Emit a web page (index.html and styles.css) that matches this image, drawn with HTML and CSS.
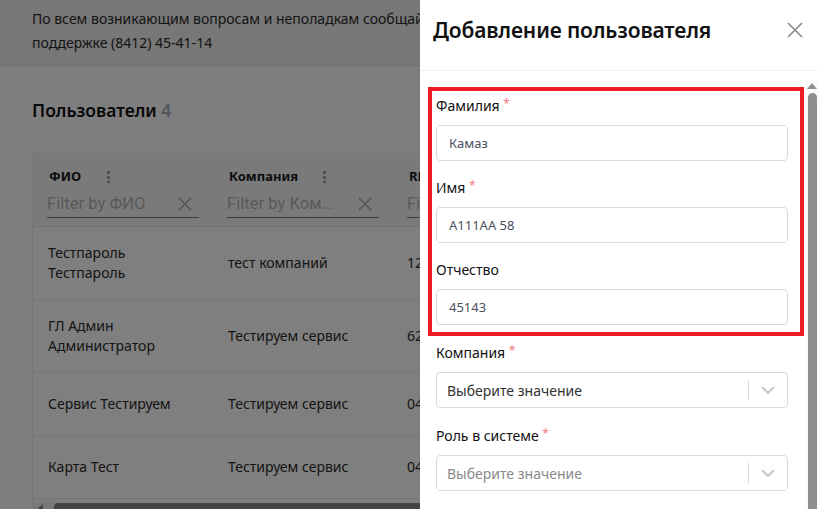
FILE: index.html
```html
<!DOCTYPE html>
<html lang="ru">
<head>
<meta charset="utf-8">
<title>Пользователи</title>
<link rel="stylesheet" href="styles.css">
</head>
<body>
<div class="page">
  <div class="banner"><p class="banner-text">По всем возникающим вопросам и неполадкам сообщайте в службу технической поддержке (8412) 45-41-14</p></div>
  <main class="main">
    <h1 class="title">Пользователи <span class="count">4</span></h1>
    <div class="card">
      <div class="thead">
        <div class="th">
          <div class="th-top"><span class="th-label">ФИО</span><span class="kebab"></span></div>
          <div class="filter"><span class="ph">Filter by ФИО</span><svg class="fx" width="14" height="14" viewBox="0 0 14 14"><path d="M1 1L13 13M13 1L1 13" stroke="#a8a8a8" stroke-width="1.5" fill="none"/></svg></div>
        </div>
        <div class="th">
          <div class="th-top"><span class="th-label">Компания</span><span class="kebab"></span></div>
          <div class="filter"><span class="ph">Filter by Ком…</span><svg class="fx" width="14" height="14" viewBox="0 0 14 14"><path d="M1 1L13 13M13 1L1 13" stroke="#a8a8a8" stroke-width="1.5" fill="none"/></svg></div>
        </div>
        <div class="th">
          <div class="th-top"><span class="th-label">RFID</span><span class="kebab"></span></div>
          <div class="filter"><span class="ph">Filter by RFID</span><svg class="fx" width="14" height="14" viewBox="0 0 14 14"><path d="M1 1L13 13M13 1L1 13" stroke="#a8a8a8" stroke-width="1.5" fill="none"/></svg></div>
        </div>
      </div>
      <div class="row tall"><div class="td">Тестпароль<br>Тестпароль</div><div class="td">тест компаний</div><div class="td">1234567890</div></div>
      <div class="row tall"><div class="td">ГЛ Админ<br>Администратор</div><div class="td">Тестируем сервис</div><div class="td">6234567890</div></div>
      <div class="row"><div class="td">Сервис Тестируем</div><div class="td">Тестируем сервис</div><div class="td">0434567890</div></div>
      <div class="row"><div class="td">Карта Тест</div><div class="td">Тестируем сервис</div><div class="td">0434567890</div></div>
      <div class="hscroll"><span class="harrow"></span><span class="hthumb"></span></div>
    </div>
  </main>
</div>
<div class="overlay"></div>
<aside class="drawer">
  <header class="dhead">
    <h2 class="dtitle">Добавление пользователя</h2>
    <svg class="close" width="16" height="16" viewBox="0 0 16 16"><path d="M1 1L15 15M15 1L1 15" stroke="#8a8a8a" stroke-width="1.6" fill="none"/></svg>
  </header>
  <div class="dbody">
    <div class="form">
      <div class="mark">
        <div class="field"><label class="label">Фамилия <span class="req">*</span></label><div class="input">Камаз</div></div>
        <div class="field"><label class="label">Имя <span class="req">*</span></label><div class="input">А111АА 58</div></div>
        <div class="field last"><label class="label">Отчество</label><div class="input">45143</div></div>
      </div>
      <div class="field plain"><label class="label">Компания <span class="req">*</span></label>
        <div class="select"><span class="sval">Выберите значение</span><span class="ssep"></span><svg class="chev" width="14" height="8" viewBox="0 0 14 8"><path d="M1 1L7 7L13 1" stroke="#c8c8c8" stroke-width="2" fill="none"/></svg></div>
      </div>
      <div class="field plain"><label class="label">Роль в системе <span class="req">*</span></label>
        <div class="select"><span class="sval muted">Выберите значение</span><span class="ssep"></span><svg class="chev" width="14" height="8" viewBox="0 0 14 8"><path d="M1 1L7 7L13 1" stroke="#c8c8c8" stroke-width="2" fill="none"/></svg></div>
      </div>
    </div>
    <div class="vscroll"><span class="varrow"></span><span class="vthumb"></span></div>
  </div>
</aside>
</body>
</html>
```
FILE: styles.css
```css
* { box-sizing: border-box; }
html, body { margin: 0; padding: 0; }
body {
  width: 819px; height: 509px; overflow: hidden;
  font-family: "Noto Sans", "Open Sans", sans-serif;
  color: #303030;
  background: #fcfcfc;
  position: relative;
}
.page { width: 819px; height: 509px; display: flex; flex-direction: column; }
.banner {
  height: 67px; flex: none;
  background: #eeeeee;
  padding: 7px 32px 0 32px;
  width: 819px;
}
.banner-text {
  margin: 0; max-width: 600px;
  font-size: 14px; line-height: 24px;
  color: #2a2a2a;
}
.main { padding: 30px 0 0 32px; flex: 1; overflow: hidden; }
.title { margin: 0; font-size: 17.5px; font-weight: 600; line-height: 26px; color: #111; }
.count { color: #a4acbd; font-weight: 600; }
.card {
  margin-top: 30px; width: 800px;
  background: #ffffff;
  border-left: 1px solid #ececec;
  border-top: 1px solid #f0f0f0;
}
.thead { display: flex; background: #f5f5f5; border-bottom: 1px solid #e6e6e6; height: 73px; }
.th { width: 180px; padding: 0 14px; flex: none; }
.th-top { display: flex; align-items: center; height: 20px; margin-top: 12px; padding-left: 2px; }
.th-label { font-size: 13px; font-weight: 700; color: #1a1a1a; width: 58px; }
.th:nth-child(2) .th-label { width: 94px; }
.kebab { width: 3px; height: 13px; background: radial-gradient(circle, #9a9a9a 1.4px, transparent 1.6px) 0 0 / 3px 5px repeat-y; }
.filter {
  display: flex; align-items: center; justify-content: space-between;
  height: 28px; margin-top: 4px;
  border-bottom: 1px solid #7c7c7c;
  font-family: Roboto, "Liberation Sans", sans-serif;
  font-size: 16.6px; color: #b2b2b2;
}
.ph { white-space: nowrap; overflow: hidden; }
.fx { margin-right: 7px; flex: none; }
.row { display: flex; align-items: center; height: 63px; border-bottom: 1px solid #eaeaea; }
.row.tall { height: 73px; }
.td { width: 180px; flex: none; padding: 0 14px 0 15px; font-size: 14px; line-height: 20px; color: #2a2a2a; }
.td:nth-child(3) { padding-left: 14px; }
.hscroll { height: 11px; display: flex; align-items: center; margin-top: 3px; background: #f2f2f2; }
.harrow { width: 0; height: 0; border-top: 4px solid transparent; border-bottom: 4px solid transparent; border-right: 5px solid #8a8a8a; margin-left: 5px; }
.hthumb { height: 9px; flex: 1; margin-left: 11px; background: #888888; border-radius: 5px 0 0 5px; }

.overlay { position: absolute; inset: 0; background: rgba(0, 0, 0, 0.5); }

.drawer {
  position: absolute; top: 0; right: 0; width: 399px; height: 509px;
  background: #ffffff; display: flex; flex-direction: column;
}
.dhead {
  height: 71px; flex: none; display: flex; align-items: center; justify-content: space-between;
  padding: 0 16px 11px 13px; border-bottom: 1px solid #eef0f4;
}
.dtitle { margin: 0; font-size: 21px; font-weight: 600; color: #111; letter-spacing: -0.15px; }
.close { margin-top: 1px; }
.dbody { flex: 1; display: flex; overflow: hidden; padding-top: 9px; }
.form { width: 385px; padding: 7px 0 0 8px; }
.mark { border: 4px solid #ec1c24; padding: 5px 12px 7px 4px; width: 376px; }
.field { margin-bottom: 17px; }
.field.last { margin-bottom: 0; }
.field.plain { margin: 7px 17px 18px 8px; }
.label { display: block; font-size: 14px; line-height: 20px; font-weight: 400; color: #111; margin-bottom: 9px; }
.req { color: #f47c7c; font-size: 12px; line-height: 0; vertical-align: 3px; }
.input {
  height: 36px; border: 1px solid #d6dae1; border-radius: 4px;
  padding: 0 12px; display: flex; align-items: center;
  font-size: 13px; color: #4a5060;
}
.select {
  height: 36px; border: 1px solid #d6dae1; border-radius: 4px;
  padding: 0 0 0 10px; display: flex; align-items: center;
  font-size: 14px;
}
.sval { flex: 1; color: #333; }
.sval.muted { color: #8a8a8a; }
.ssep { width: 1px; height: 20px; background: #d8d8d8; }
.chev { margin: 0 12px 0 12px; }
.vscroll { width: 14px; flex: none; display: flex; flex-direction: column; align-items: center; background: #fafafa; }
.varrow { width: 0; height: 0; border-left: 5px solid transparent; border-right: 5px solid transparent; border-bottom: 6px solid #8e8e8e; margin-top: 3px; }
.vthumb { width: 9px; flex: 1; margin-top: 4px; background: #8e8e8e; border-radius: 5px 5px 0 0; }
```
